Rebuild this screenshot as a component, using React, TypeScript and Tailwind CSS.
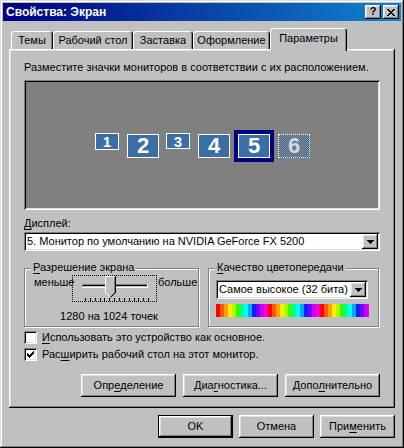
import React from "react";

const RAISED =
  "shadow-[inset_-1px_-1px_#000000,inset_1px_1px_#ffffff,inset_-2px_-2px_#808080,inset_2px_2px_#dfdfdf]";
const SUNKEN =
  "shadow-[inset_1px_1px_#808080,inset_-1px_-1px_#ffffff,inset_2px_2px_#000000,inset_-2px_-2px_#dfdfdf]";
const TAB =
  "shadow-[inset_1px_1px_#ffffff,inset_-1px_0_#000000,inset_-2px_0_#808080]";

function U({ children }: { children: React.ReactNode }) {
  return <span className="underline decoration-1 underline-offset-[2px]">{children}</span>;
}

function Arrow() {
  return (
    <svg width="7" height="4" viewBox="0 0 7 4" shapeRendering="crispEdges">
      <path d="M0 0h7v1H0zM1 1h5v1H1zM2 2h3v1H2zM3 3h1v1H3z" fill="#000" />
    </svg>
  );
}

function Combo({ text, w }: { text: string; w: string }) {
  return (
    <div className={`${w} h-[19px] bg-white ${SUNKEN} flex items-center pl-[3px] pr-[2px]`}>
      <span className="flex-1 leading-[13px] whitespace-nowrap">{text}</span>
      <div className={`w-[16px] h-[15px] bg-[#c0c0c0] ${RAISED} flex items-center justify-center`}>
        <Arrow />
      </div>
    </div>
  );
}

function Button({
  children,
  w,
  def = false,
}: {
  children: React.ReactNode;
  w: string;
  def?: boolean;
}) {
  return (
    <div
      className={`${w} h-[23px] bg-[#c0c0c0] flex items-center justify-center leading-[13px] ${
        def ? "border border-black " + RAISED : RAISED
      }`}
    >
      {children}
    </div>
  );
}

function Check({ checked }: { checked: boolean }) {
  return (
    <div className={`w-[13px] h-[13px] bg-white ${SUNKEN} relative`}>
      {checked && (
        <svg
          className="absolute left-[3px] top-[3px]"
          width="7"
          height="7"
          viewBox="0 0 7 7"
          shapeRendering="crispEdges"
        >
          <path
            d="M6 0h1v1H6zM5 1h2v1H5zM0 2h1v1H0zM4 2h3v1H4zM0 3h2v1H0zM3 3h3v1H3zM0 4h5v1H0zM1 5h3v1H1zM2 6h1v1H2z"
            fill="#000"
          />
        </svg>
      )}
    </div>
  );
}

function Monitor({
  n,
  cls,
  text,
}: {
  n: string;
  cls: string;
  text: string;
}) {
  return (
    <div
      className={`${cls} border border-white bg-[#3a6ea5] flex items-center justify-center text-white font-bold leading-none ${text}`}
    >
      {n}
    </div>
  );
}

function Slider() {
  const ticks = Array.from({ length: 14 }, (_, i) => 13 + Math.round(i * 4.85));
  return (
    <svg width="83" height="25" viewBox="0 0 83 25" shapeRendering="crispEdges">
      {/* track */}
      <rect x="9" y="8" width="66" height="1" fill="#808080" />
      <rect x="9" y="8" width="1" height="4" fill="#808080" />
      <rect x="10" y="9" width="64" height="1" fill="#000000" />
      <rect x="10" y="9" width="1" height="2" fill="#000000" />
      <rect x="10" y="10" width="64" height="1" fill="#c0c0c0" />
      <rect x="9" y="11" width="66" height="1" fill="#ffffff" />
      <rect x="74" y="8" width="1" height="4" fill="#ffffff" />
      {/* ticks */}
      {ticks.map((x) => (
        <rect key={x} x={x - 1} y="22" width="1" height="3" fill="#000" />
      ))}
      {/* thumb */}
      <polygon points="32,0 42,0 42,16 37,21 32,16" fill="#c0c0c0" />
      <polyline points="32.5,16.5 32.5,0.5 42,0.5" fill="none" stroke="#ffffff" />
      <polyline points="32.5,16.5 37.5,21.5" fill="none" stroke="#ffffff" shapeRendering="auto" />
      <polyline points="41.5,1 41.5,16.5" fill="none" stroke="#808080" />
      <polyline points="42.5,0 42.5,16.5" fill="none" stroke="#000000" />
      <polyline points="42.5,16.5 37.5,21.5" fill="none" stroke="#000000" shapeRendering="auto" />
      <polyline points="41.5,16.5 37.5,20.5" fill="none" stroke="#808080" shapeRendering="auto" />
    </svg>
  );
}

export default function App() {
  const tabs: [string, string][] = [
    ["Темы", "w-[42px]"],
    ["Рабочий стол", "w-[80px]"],
    ["Заставка", "w-[60px]"],
    ["Оформление", "w-[77px]"],
  ];
  return (
    <div
      className={`w-[404px] h-[448px] bg-[#c0c0c0] p-[3px] flex flex-col text-[11px] text-black font-['Liberation_Sans',Arial,sans-serif] shadow-[inset_-1px_-1px_#000000,inset_1px_1px_#dfdfdf,inset_-2px_-2px_#808080,inset_2px_2px_#ffffff]`}
    >
      {/* title bar */}
      <div className="h-[18px] flex items-center pl-[3px] pr-[2px] bg-[linear-gradient(90deg,#000080,#1084d0)]">
        <span className="text-white font-bold text-[12px] leading-none">Свойства: Экран</span>
        <div className="ml-auto flex gap-[2px]">
          <div className={`w-[16px] h-[14px] bg-[#c0c0c0] ${RAISED} flex items-center justify-center font-bold text-[11px] leading-none pb-[1px]`}>
            ?
          </div>
          <div className={`w-[16px] h-[14px] bg-[#c0c0c0] ${RAISED} flex items-center justify-center`}>
            <svg width="8" height="7" viewBox="0 0 8 7" shapeRendering="crispEdges">
              <path
                d="M0 0h2v1H0zM6 0h2v1H6zM1 1h2v1H1zM5 1h2v1H5zM2 2h4v1H2zM3 3h2v1H3zM2 4h4v1H2zM1 5h2v1H1zM5 5h2v1H5zM0 6h2v1H0zM6 6h2v1H6z"
                fill="#000"
              />
            </svg>
          </div>
        </div>
      </div>

      {/* body */}
      <div className="flex flex-col px-[6px] pt-[7px]">
        {/* tabs */}
        <div className="h-[21px] flex items-end pl-[2px]">
          {tabs.map(([t, w]) => (
            <div
              key={t}
              className={`${w} h-[18px] bg-[#c0c0c0] ${TAB} rounded-t-[3px] flex items-center justify-center leading-[13px] whitespace-nowrap`}
            >
              {t}
            </div>
          ))}
          <div
            className={`w-[77px] h-[23px] -mb-[2px] relative z-10 bg-[#c0c0c0] ${TAB} rounded-t-[3px] flex items-center justify-center pb-[3px] leading-[13px]`}
          >
            Параметры
          </div>
        </div>

        {/* panel */}
        <div className={`h-[359px] bg-[#c0c0c0] ${RAISED} flex flex-col px-[15px] pt-[12px]`}>
          <div className="h-[13px] leading-[13px] whitespace-nowrap">
            Разместите значки мониторов в соответствии с их расположением.
          </div>

          {/* monitor canvas */}
          <div className={`mt-[6px] h-[130px] bg-[#808080] ${SUNKEN} relative`}>
            <Monitor n="1" cls="absolute left-[71px] top-[53px] w-[24px] h-[17px]" text="text-[15px]" />
            <Monitor n="2" cls="absolute left-[103px] top-[54px] w-[32px] h-[24px]" text="text-[22px]" />
            <Monitor n="3" cls="absolute left-[142px] top-[53px] w-[24px] h-[16px]" text="text-[15px]" />
            <Monitor n="4" cls="absolute left-[174px] top-[54px] w-[32px] h-[24px]" text="text-[22px]" />
            <div className="absolute left-[210px] top-[50px] w-[40px] h-[32px] border-[4px] border-[#000080]">
              <Monitor n="5" cls="w-[32px] h-[24px]" text="text-[22px]" />
            </div>
            <div className="absolute left-[254px] top-[54px] w-[32px] h-[24px] border border-dotted border-white bg-[image:repeating-conic-gradient(#3a6ea5_0_25%,#8a8a8a_0_50%)] bg-[length:2px_2px] flex items-center justify-center text-[#d8d8d8] font-bold text-[22px] leading-none">
              6
            </div>
          </div>

          {/* display */}
          <div className="mt-[7px] h-[13px] leading-[13px]">
            <U>Д</U>исплей:
          </div>
          <div className="mt-[2px]">
            <Combo text="5. Монитор по умолчанию на NVIDIA GeForce FX 5200" w="w-[356px]" />
          </div>

          {/* groups */}
          <div className="mt-[17px] flex gap-[9px]">
            <div className="relative w-[175px] h-[59px] border border-[#808080] shadow-[inset_1px_1px_#ffffff,1px_1px_#ffffff] flex flex-col">
              <div className="absolute -top-[8px] left-[6px] px-[2px] bg-[#c0c0c0] leading-[13px] whitespace-nowrap">
                <U>Р</U>азрешение экрана
              </div>
              <div className="pt-[6px] pl-[9px] flex items-start">
                <div className="w-[38px] mt-[1px] leading-[13px] whitespace-nowrap">меньше</div>
                <div className="w-[85px] h-[27px] border border-dotted border-black">
                  <Slider />
                </div>
                <div className="ml-[1px] mt-[1px] leading-[13px] whitespace-nowrap">больше</div>
              </div>
              <div className="mt-[8px] pr-[5px] text-center leading-[13px] whitespace-nowrap">
                1280 на 1024 точек
              </div>
            </div>

            <div className="relative w-[171px] h-[59px] border border-[#808080] shadow-[inset_1px_1px_#ffffff,1px_1px_#ffffff] flex flex-col pl-[7px] pt-[11px]">
              <div className="absolute -top-[8px] left-[6px] px-[2px] bg-[#c0c0c0] leading-[13px] whitespace-nowrap">
                <U>К</U>ачество цветопередачи
              </div>
              <Combo text="Самое высокое (32 бита)" w="w-[152px]" />
              <div className="mt-[5px] w-[153px] h-[13px] bg-[image:repeating-linear-gradient(90deg,#ff0000_0_4px,#ff5a00_4px_8px,#ffa000_8px_12px,#ffee00_12px_16px,#a8ff00_16px_20px,#30ff00_20px_24px,#00ff90_24px_28px,#00ffff_28px_32px,#00a8ff_32px_36px,#1020ff_36px_40px,#7a00ff_40px_44px,#c800ff_44px_48px,#ff00c8_48px_52px)]" />
            </div>
          </div>

          {/* checkboxes */}
          <div className="mt-[4px] h-[13px] flex items-center gap-[5px]">
            <Check checked={false} />
            <span className="leading-[13px] whitespace-nowrap">
              <U>И</U>спользовать это устройство как основное.
            </span>
          </div>
          <div className="mt-[4px] h-[13px] flex items-center gap-[5px]">
            <Check checked={true} />
            <span className="leading-[13px] whitespace-nowrap">
              Рас<U>ш</U>ирить рабочий стол на этот монитор.
            </span>
          </div>

          {/* panel buttons */}
          <div className="mt-[13px] flex justify-end gap-[7px]">
            <Button w="w-[95px]">
              Опр<U>е</U>деление
            </Button>
            <Button w="w-[95px]">
              Диа<U>г</U>ностика...
            </Button>
            <Button w="w-[95px]">
              Допо<U>л</U>нительно
            </Button>
          </div>
        </div>

        {/* dialog buttons */}
        <div className="mt-[7px] flex justify-end gap-[6px]">
          <Button w="w-[75px]" def>
            OK
          </Button>
          <Button w="w-[75px]">Отмена</Button>
          <Button w="w-[75px]">
            При<U>м</U>енить
          </Button>
        </div>
      </div>
    </div>
  );
}
